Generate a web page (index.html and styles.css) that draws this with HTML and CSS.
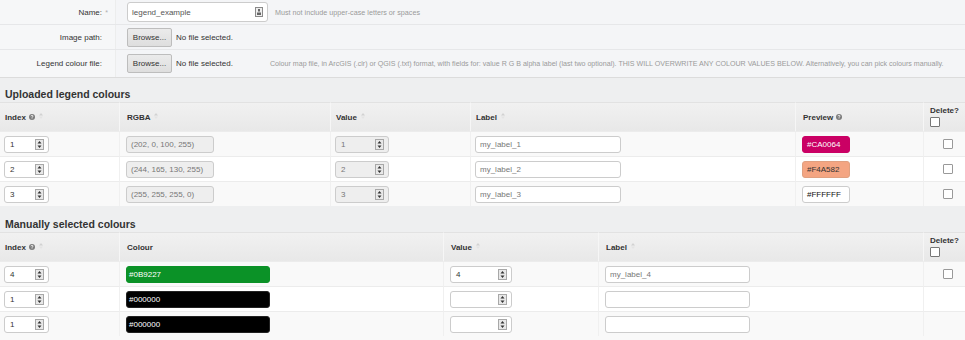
FILE: index.html
```html
<!DOCTYPE html>
<html>
<head>
<meta charset="utf-8">
<link rel="stylesheet" href="styles.css">
</head>
<body>
<div class="form">
  <div class="frow">
    <div class="flabel">Name:<span class="req">*</span></div>
    <div class="ffield">
      <div class="text-input"><span>legend_example</span>
        <svg class="kicon" width="8" height="10" viewBox="0 0 8 10"><rect x="0.5" y="0.5" width="7" height="9" fill="#eee" stroke="#8a8a8a"/><rect x="3" y="2" width="2" height="2.5" fill="#666"/><rect x="2" y="5.5" width="4" height="2.5" fill="#666"/></svg>
      </div>
      <span class="hint">Must not include upper-case letters or spaces</span>
    </div>
  </div>
  <div class="frow">
    <div class="flabel">Image path:<span class="req"></span></div>
    <div class="ffield">
      <div class="file"><span class="browse">Browse...</span><span class="nofile">No file selected.</span></div>
    </div>
  </div>
  <div class="frow last">
    <div class="flabel">Legend colour file:<span class="req"></span></div>
    <div class="ffield">
      <div class="file"><span class="browse">Browse...</span><span class="nofile">No file selected.</span></div>
      <span class="longhint">Colour map file, in ArcGIS (.clr) or QGIS (.txt) format, with fields for: value R G B alpha label (last two optional). THIS WILL OVERWRITE ANY COLOUR VALUES BELOW. Alternatively, you can pick colours manually.</span>
    </div>
  </div>
</div>

<h2 class="section">Uploaded legend colours</h2>
<table class="tbl">
  <colgroup><col style="width:119px"><col style="width:211px"><col style="width:140px"><col style="width:325px"><col style="width:128px"><col style="width:42px"></colgroup>
  <thead>
    <tr>
      <th>Index <svg class="help" width="6" height="6" viewBox="0 0 6 6"><circle cx="3" cy="3" r="3" fill="#7b7b7b"/><path d="M2 2.3Q2 1.3 3 1.3Q4 1.3 4 2.2Q4 2.8 3 3.2V3.8" stroke="#fff" stroke-width="0.8" fill="none"/><circle cx="3" cy="4.7" r="0.45" fill="#fff"/></svg> <svg class="sort" width="4" height="6" viewBox="0 0 4 6"><path d="M2 0L4 2.5H0Z" fill="#d2d2d2"/><path d="M0 3.5H4L2 6Z" fill="#e4e4e4"/></svg></th>
      <th class="p7">RGBA <svg class="sort" width="4" height="6" viewBox="0 0 4 6"><path d="M2 0L4 2.5H0Z" fill="#d2d2d2"/><path d="M0 3.5H4L2 6Z" fill="#e4e4e4"/></svg></th>
      <th>Value <svg class="sort" width="4" height="6" viewBox="0 0 4 6"><path d="M2 0L4 2.5H0Z" fill="#d2d2d2"/><path d="M0 3.5H4L2 6Z" fill="#e4e4e4"/></svg></th>
      <th>Label <svg class="sort" width="4" height="6" viewBox="0 0 4 6"><path d="M2 0L4 2.5H0Z" fill="#d2d2d2"/><path d="M0 3.5H4L2 6Z" fill="#e4e4e4"/></svg></th>
      <th class="p7">Preview <svg class="help" width="6" height="6" viewBox="0 0 6 6"><circle cx="3" cy="3" r="3" fill="#7b7b7b"/><path d="M2 2.3Q2 1.3 3 1.3Q4 1.3 4 2.2Q4 2.8 3 3.2V3.8" stroke="#fff" stroke-width="0.8" fill="none"/><circle cx="3" cy="4.7" r="0.45" fill="#fff"/></svg></th>
      <th class="del">Delete?<span class="cb"></span></th>
    </tr>
  </thead>
  <tbody>
    <tr class="odd">
      <td><span class="num w45"><span>1</span><svg class="spin" width="9" height="11" viewBox="0 0 9 11"><rect x="0.5" y="0.5" width="8" height="10" fill="#e8e8e8" stroke="#a8a8a8"/><path d="M4.5 2L6.5 4.5H2.5Z M2.5 6.5H6.5L4.5 9Z" fill="#333"/></svg></span></td>
      <td class="p7"><span class="box dis w88">(202, 0, 100, 255)</span></td>
      <td><span class="num dis w54"><span>1</span><svg class="spin" width="9" height="11" viewBox="0 0 9 11"><rect x="0.5" y="0.5" width="8" height="10" fill="#e8e8e8" stroke="#a8a8a8"/><path d="M4.5 2L6.5 4.5H2.5Z M2.5 6.5H6.5L4.5 9Z" fill="#333"/></svg></span></td>
      <td><span class="box lbl w146">my_label_1</span></td>
      <td class="p7"><span class="box prev pink">#CA0064</span></td>
      <td class="dcell"><span class="cb"></span></td>
    </tr>
    <tr>
      <td><span class="num w45"><span>2</span><svg class="spin" width="9" height="11" viewBox="0 0 9 11"><rect x="0.5" y="0.5" width="8" height="10" fill="#e8e8e8" stroke="#a8a8a8"/><path d="M4.5 2L6.5 4.5H2.5Z M2.5 6.5H6.5L4.5 9Z" fill="#333"/></svg></span></td>
      <td class="p7"><span class="box dis w88">(244, 165, 130, 255)</span></td>
      <td><span class="num dis w54"><span>2</span><svg class="spin" width="9" height="11" viewBox="0 0 9 11"><rect x="0.5" y="0.5" width="8" height="10" fill="#e8e8e8" stroke="#a8a8a8"/><path d="M4.5 2L6.5 4.5H2.5Z M2.5 6.5H6.5L4.5 9Z" fill="#333"/></svg></span></td>
      <td><span class="box lbl w146">my_label_2</span></td>
      <td class="p7"><span class="box prev salmon">#F4A582</span></td>
      <td class="dcell"><span class="cb"></span></td>
    </tr>
    <tr class="odd">
      <td><span class="num w45"><span>3</span><svg class="spin" width="9" height="11" viewBox="0 0 9 11"><rect x="0.5" y="0.5" width="8" height="10" fill="#e8e8e8" stroke="#a8a8a8"/><path d="M4.5 2L6.5 4.5H2.5Z M2.5 6.5H6.5L4.5 9Z" fill="#333"/></svg></span></td>
      <td class="p7"><span class="box dis w88">(255, 255, 255, 0)</span></td>
      <td><span class="num dis w54"><span>3</span><svg class="spin" width="9" height="11" viewBox="0 0 9 11"><rect x="0.5" y="0.5" width="8" height="10" fill="#e8e8e8" stroke="#a8a8a8"/><path d="M4.5 2L6.5 4.5H2.5Z M2.5 6.5H6.5L4.5 9Z" fill="#333"/></svg></span></td>
      <td><span class="box lbl w146">my_label_3</span></td>
      <td class="p7"><span class="box prev white">#FFFFFF</span></td>
      <td class="dcell"><span class="cb"></span></td>
    </tr>
  </tbody>
</table>

<h2 class="section second">Manually selected colours</h2>
<table class="tbl">
  <colgroup><col style="width:119px"><col style="width:324px"><col style="width:155px"><col style="width:325px"><col style="width:42px"></colgroup>
  <thead>
    <tr>
      <th>Index <svg class="help" width="6" height="6" viewBox="0 0 6 6"><circle cx="3" cy="3" r="3" fill="#7b7b7b"/><path d="M2 2.3Q2 1.3 3 1.3Q4 1.3 4 2.2Q4 2.8 3 3.2V3.8" stroke="#fff" stroke-width="0.8" fill="none"/><circle cx="3" cy="4.7" r="0.45" fill="#fff"/></svg> <svg class="sort" width="4" height="6" viewBox="0 0 4 6"><path d="M2 0L4 2.5H0Z" fill="#d2d2d2"/><path d="M0 3.5H4L2 6Z" fill="#e4e4e4"/></svg></th>
      <th class="p7">Colour</th>
      <th class="p7">Value <svg class="sort" width="4" height="6" viewBox="0 0 4 6"><path d="M2 0L4 2.5H0Z" fill="#d2d2d2"/><path d="M0 3.5H4L2 6Z" fill="#e4e4e4"/></svg></th>
      <th class="p7">Label <svg class="sort" width="4" height="6" viewBox="0 0 4 6"><path d="M2 0L4 2.5H0Z" fill="#d2d2d2"/><path d="M0 3.5H4L2 6Z" fill="#e4e4e4"/></svg></th>
      <th class="del">Delete?<span class="cb"></span></th>
    </tr>
  </thead>
  <tbody>
    <tr class="odd">
      <td><span class="num w45"><span>4</span><svg class="spin" width="9" height="11" viewBox="0 0 9 11"><rect x="0.5" y="0.5" width="8" height="10" fill="#e8e8e8" stroke="#a8a8a8"/><path d="M4.5 2L6.5 4.5H2.5Z M2.5 6.5H6.5L4.5 9Z" fill="#333"/></svg></span></td>
      <td class="p7"><span class="box colour green">#0B9227</span></td>
      <td class="p7"><span class="num w62"><span>4</span><svg class="spin" width="9" height="11" viewBox="0 0 9 11"><rect x="0.5" y="0.5" width="8" height="10" fill="#e8e8e8" stroke="#a8a8a8"/><path d="M4.5 2L6.5 4.5H2.5Z M2.5 6.5H6.5L4.5 9Z" fill="#333"/></svg></span></td>
      <td class="p7"><span class="box lbl w145">my_label_4</span></td>
      <td class="dcell"><span class="cb"></span></td>
    </tr>
    <tr>
      <td><span class="num w45"><span>1</span><svg class="spin" width="9" height="11" viewBox="0 0 9 11"><rect x="0.5" y="0.5" width="8" height="10" fill="#e8e8e8" stroke="#a8a8a8"/><path d="M4.5 2L6.5 4.5H2.5Z M2.5 6.5H6.5L4.5 9Z" fill="#333"/></svg></span></td>
      <td class="p7"><span class="box colour black">#000000</span></td>
      <td class="p7"><span class="num w62"><span></span><svg class="spin" width="9" height="11" viewBox="0 0 9 11"><rect x="0.5" y="0.5" width="8" height="10" fill="#e8e8e8" stroke="#a8a8a8"/><path d="M4.5 2L6.5 4.5H2.5Z M2.5 6.5H6.5L4.5 9Z" fill="#333"/></svg></span></td>
      <td class="p7"><span class="box lbl w145"></span></td>
      <td class="dcell"></td>
    </tr>
    <tr class="odd">
      <td><span class="num w45"><span>1</span><svg class="spin" width="9" height="11" viewBox="0 0 9 11"><rect x="0.5" y="0.5" width="8" height="10" fill="#e8e8e8" stroke="#a8a8a8"/><path d="M4.5 2L6.5 4.5H2.5Z M2.5 6.5H6.5L4.5 9Z" fill="#333"/></svg></span></td>
      <td class="p7"><span class="box colour black">#000000</span></td>
      <td class="p7"><span class="num w62"><span></span><svg class="spin" width="9" height="11" viewBox="0 0 9 11"><rect x="0.5" y="0.5" width="8" height="10" fill="#e8e8e8" stroke="#a8a8a8"/><path d="M4.5 2L6.5 4.5H2.5Z M2.5 6.5H6.5L4.5 9Z" fill="#333"/></svg></span></td>
      <td class="p7"><span class="box lbl w145"></span></td>
      <td class="dcell"></td>
    </tr>
  </tbody>
</table>
</body>
</html>
```

FILE: styles.css
```css
* { box-sizing: border-box; }
html, body { margin: 0; padding: 0; }
body {
  width: 965px;
  font-family: "Liberation Sans", Arial, sans-serif;
  font-size: 8px;
  color: #333;
  background: #f9f9f9;
  overflow: hidden;
}

/* top form */
.form { background: #f4f5f7; border-bottom: 1px solid #dcdcdc; }
.frow { display: flex; height: 25px; border-bottom: 1px solid #e6e7e9; }
.frow.last { height: 27px; border-bottom: none; }
.flabel {
  width: 115px; flex: none;
  display: flex; align-items: center; justify-content: flex-end;
  padding-right: 7px;
  background: #f6f7f8;
}
.req { width: 6px; text-align: right; color: #b0b0b0; font-size: 7px; }
.ffield {
  flex: 1; display: flex; align-items: center;
  padding-left: 11px;
  border-left: 1px solid #eceded;
}
.text-input {
  width: 141px; height: 20px;
  display: flex; align-items: center; justify-content: space-between;
  padding: 0 4px 0 4px;
  background: #fff; border: 1px solid #ccc; border-radius: 3px;
  color: #555;
}
.kicon { display: block; }
.hint { margin-left: 7px; font-size: 7.2px; color: #9a9a9a; }
.file { width: 143px; flex: none; display: flex; align-items: center; }
.browse {
  width: 45px; height: 19px;
  display: flex; align-items: center; justify-content: center;
  border: 1px solid #bdbdbd; border-radius: 2px;
  background: linear-gradient(#ebebeb, #dedede);
  color: #333;
}
.nofile { margin-left: 4px; }
.longhint { font-size: 7.08px; color: #9a9a9a; white-space: nowrap; }

/* sections */
.section {
  margin: 0;
  padding: 10px 5px 2px;
  height: 24px;
  line-height: 12px;
  font-size: 10.5px;
  font-weight: bold;
  color: #333;
  background: #eeeff0;
}
.section.second { padding-top: 12px; height: 26px; }

/* tables */
.tbl {
  width: 965px;
  table-layout: fixed;
  border-collapse: separate;
  border-spacing: 0;
}
.tbl th {
  height: 29px;
  padding: 0 5px;
  text-align: left;
  vertical-align: middle;
  font-weight: bold;
  font-size: 8px;
  color: #333;
  background: linear-gradient(#f1f1f1, #e8e8e8);
  border-top: 1px solid #e2e2e2;
  border-left: 1px solid #f6f6f6;
  white-space: nowrap;
}
.tbl th:first-child { border-left: none; }
.tbl th.del { vertical-align: top; padding: 3px 0 0 6px; line-height: 9px; }
.tbl th.del .cb { display: block; margin-top: 2px; border-color: #777; }
.tbl .p7 { padding-left: 7px; }
.help { vertical-align: -0.5px; margin-left: 1px; }
.sort { vertical-align: 1px; margin-left: 2px; }

.tbl td {
  height: 25px;
  padding: 0 4px;
  vertical-align: middle;
  background: #fff;
  border-top: 1px solid #ececec;
  border-left: 1px solid #f0f0f0;
  white-space: nowrap;
}
.tbl td:first-child { border-left: none; }
.tbl tr.odd td { background: #f9f9f9; }
.tbl td.p7 { padding-left: 6px; }
.tbl td.dcell { text-align: center; padding: 0 0 0 7px; }

.num, .box {
  display: inline-flex; align-items: center;
  height: 17px;
  border: 1px solid #ccc; border-radius: 3px;
  background: #fff;
  font-size: 8px;
  vertical-align: middle;
}
.num { justify-content: space-between; padding: 0 4px 0 5px; color: #333; }
.spin { display: block; }
.box { padding: 0 4px; }
.dis { background: #eee; color: #777; }
.lbl { color: #777; }
.w45 { width: 45px; }
.w54 { width: 54px; }
.w62 { width: 62px; }
.w88 { width: 88px; }
.w145 { width: 145px; }
.w146 { width: 146px; }
.prev { width: 48px; }
.pink { background: #CA0064; border-color: #CA0064; color: #fff; }
.salmon { background: #F4A582; border-color: #e0a080; color: #333; }
.white { background: #fff; color: #111; }
.colour { width: 144px; padding-left: 2px; color: #fff; }
.green { background: #0B9227; border-color: #0B9227; }
.black { background: #000; border-color: #222; }

.cb {
  display: inline-block;
  width: 10px; height: 10px;
  border: 1px solid #999;
  border-radius: 1px;
  background: #fff;
  vertical-align: middle;
}
```
